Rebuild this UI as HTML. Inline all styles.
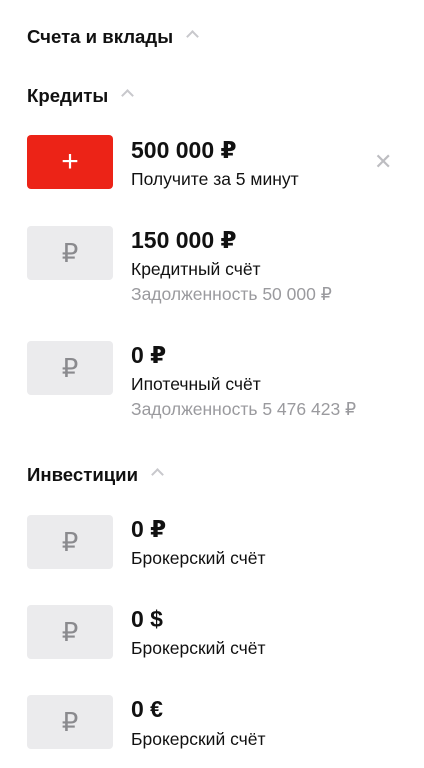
<!DOCTYPE html>
<html><head><meta charset="utf-8"><style>
body{margin:0;width:424px;height:768px;background:#fff;font-family:"Liberation Sans","DejaVu Sans",sans-serif;position:relative;overflow:hidden;color:#111}
.h{position:absolute;left:27px;font-size:18.6px;font-weight:bold;line-height:20px;transform:translateY(-50%)}
.car{display:inline-block;width:7px;height:7px;border-left:2px solid #c8c8cc;border-top:2px solid #c8c8cc;transform:rotate(45deg);margin-left:15px;vertical-align:2px}
.card{position:absolute;left:27px;width:86px;height:54px;border-radius:4px;background:#ebebed;color:#8a8a8e;font-size:26px;text-align:center;line-height:54px}
.t{position:absolute;left:131px;transform:translateY(-50%);white-space:nowrap}
.a{font-size:23px;font-weight:bold;line-height:26px}
.s{font-size:17.5px;line-height:20px}
.g{font-size:17.5px;line-height:20px;color:#9a9a9e}
</style></head><body>
<div class="h" style="top:37px">Счета и вклады<span class="car"></span></div>
<div class="h" style="top:96px">Кредиты<span class="car"></span></div>
<div class="card" style="top:135px;background:#ec2317;color:#fff;font-size:30px;font-weight:normal">+</div>
<div class="t a" style="top:150px">500 000 ₽</div>
<div class="t s" style="top:179px">Получите за 5 минут</div>
<div style="position:absolute;left:374px;top:152px;font-size:22px;color:#bdbdc1;line-height:20px">✕</div>
<div class="card" style="top:226px">₽</div>
<div class="t a" style="top:240px">150 000 ₽</div>
<div class="t s" style="top:269px">Кредитный счёт</div>
<div class="t g" style="top:294px">Задолженность 50 000 ₽</div>
<div class="card" style="top:341px">₽</div>
<div class="t a" style="top:355px">0 ₽</div>
<div class="t s" style="top:384px">Ипотечный счёт</div>
<div class="t g" style="top:409px">Задолженность 5 476 423 ₽</div>
<div class="h" style="top:475px">Инвестиции<span class="car"></span></div>
<div class="card" style="top:515px">₽</div>
<div class="t a" style="top:529px">0 ₽</div>
<div class="t s" style="top:558px">Брокерский счёт</div>
<div class="card" style="top:605px">₽</div>
<div class="t a" style="top:619px">0 $</div>
<div class="t s" style="top:648px">Брокерский счёт</div>
<div class="card" style="top:695px">₽</div>
<div class="t a" style="top:709px">0 €</div>
<div class="t s" style="top:739px">Брокерский счёт</div>
</body></html>
